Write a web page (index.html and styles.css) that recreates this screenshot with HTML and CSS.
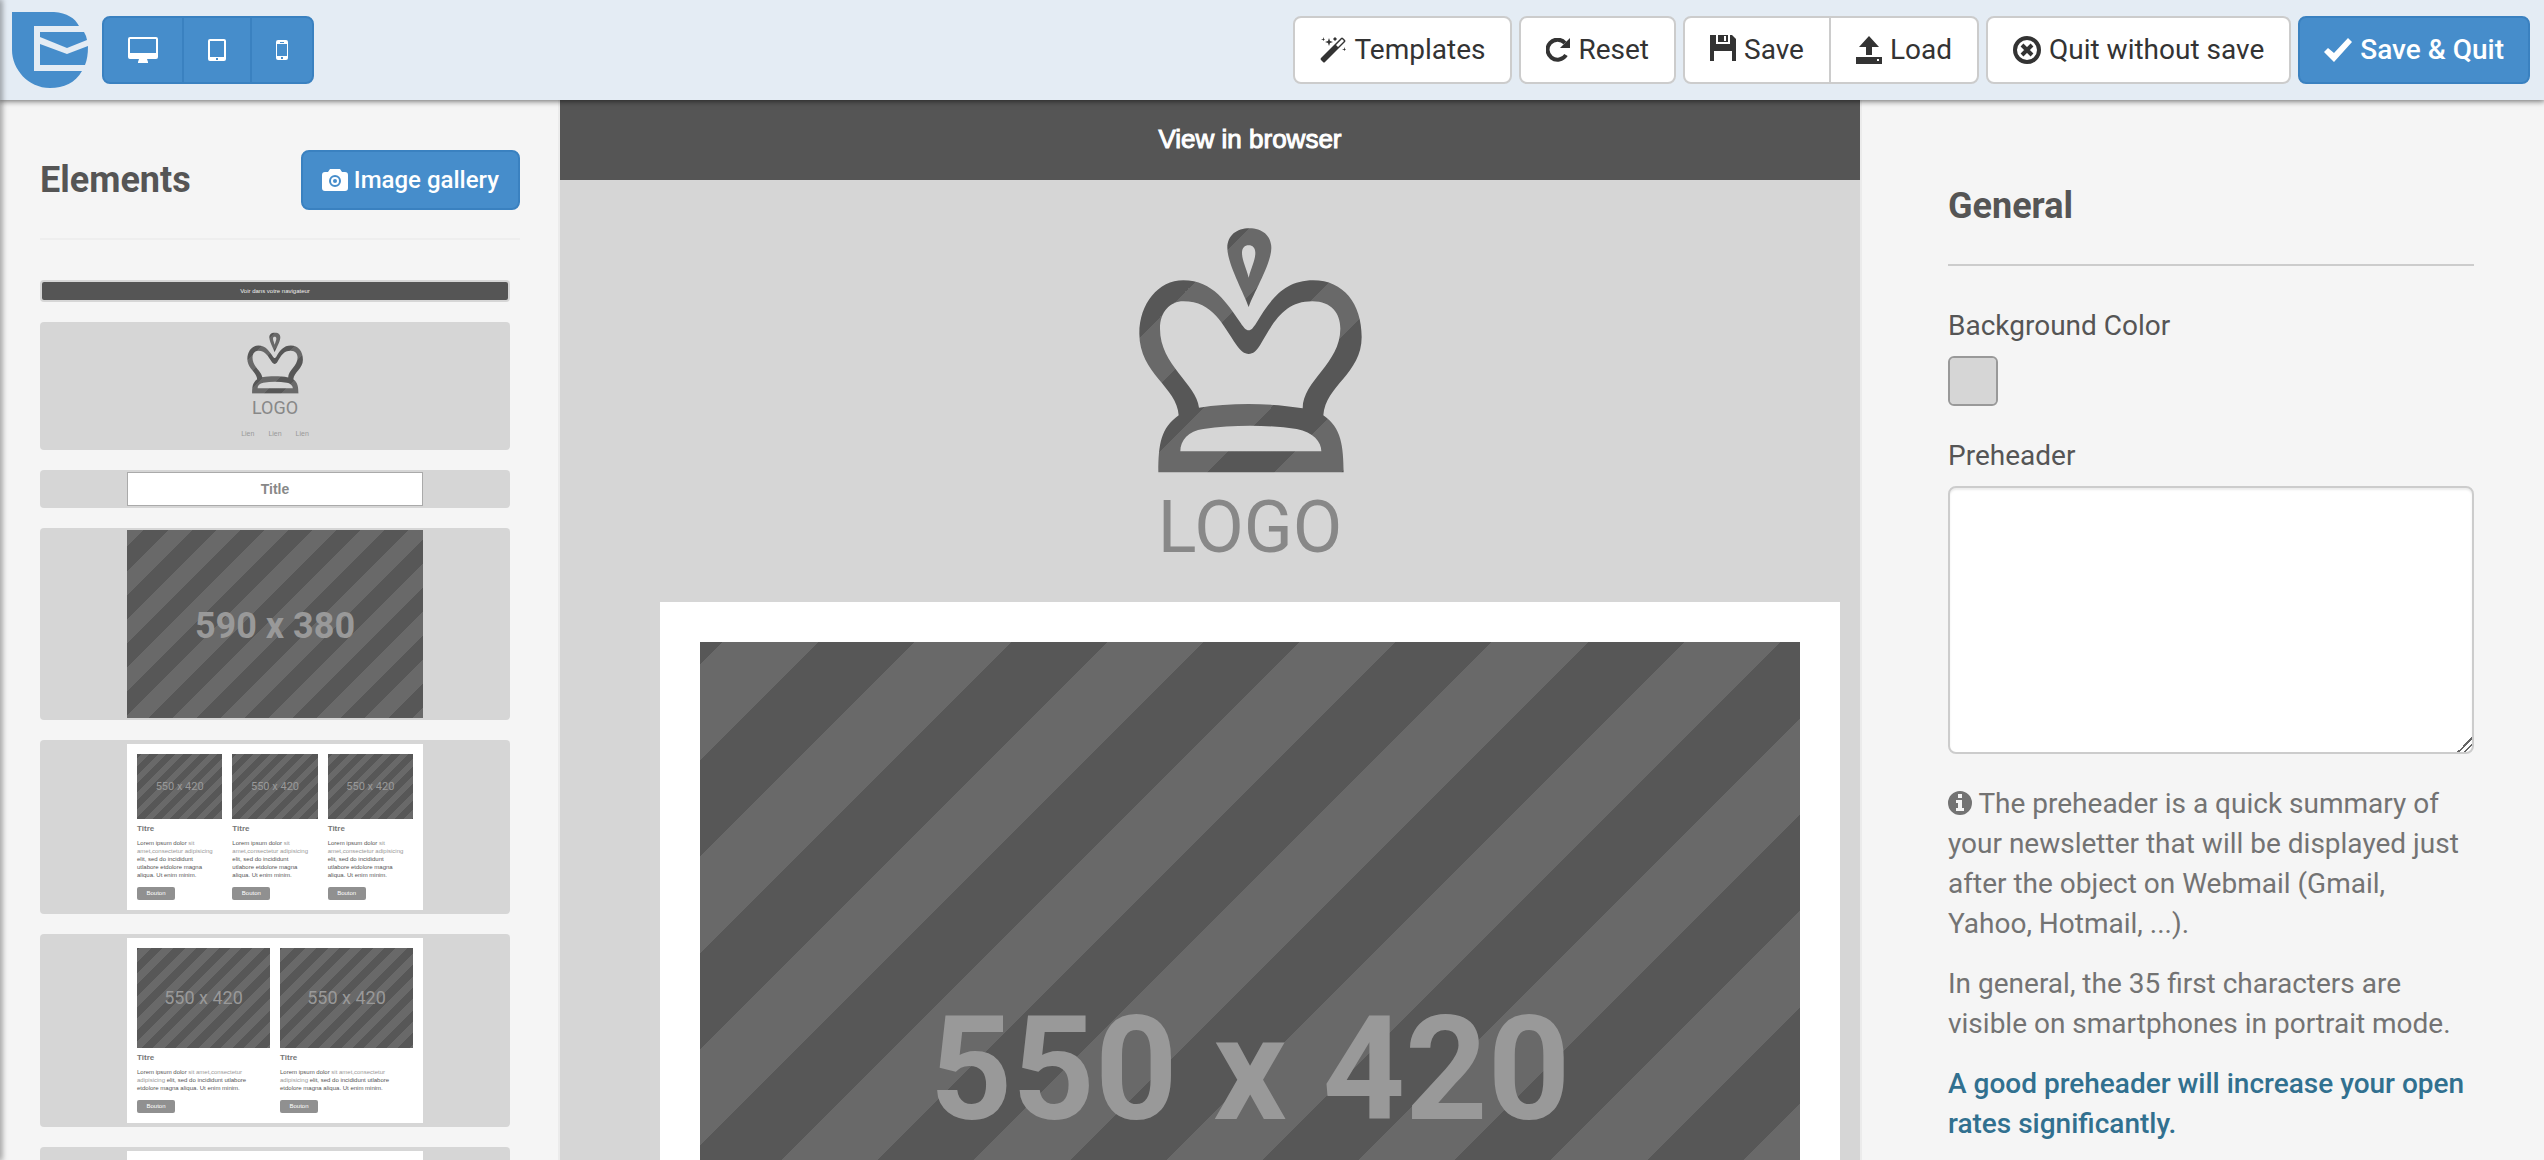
FILE: index.html
```html
<!DOCTYPE html>
<html lang="en">
<head>
    <meta charset="UTF-8">
    <meta name="viewport" content="width=device-width, initial-scale=1.0">
    <title>Newsletter editor</title>
    <link rel="stylesheet" href="styles.css">
</head>
<body>
    <!-- Shared crown drawing -->
    <svg class="defs" aria-hidden="true">
        <defs>
            <linearGradient id="stripes" gradientUnits="userSpaceOnUse" spreadMethod="repeat" x1="460" y1="460" x2="662" y2="662">
                <stop offset="0" stop-color="#696969"/>
                <stop offset="0.5" stop-color="#696969"/>
                <stop offset="0.5" stop-color="#575757"/>
                <stop offset="1" stop-color="#575757"/>
            </linearGradient>
            <symbol id="crown" viewBox="174 413 672 735">
                <path fill="url(#stripes)" fill-rule="evenodd" d="M506 650C490 605 442 520 442 473C442 435 470 414 508 414C546 414 574 435 574 473C574 520 522 605 506 650ZM506 562C514 530 526 510 526 487C526 473 518 465 506 465C494 465 486 473 486 487C486 510 498 530 506 562ZM235 1146C235 1060 243 1013 296 975C292 890 178 850 178 730C178 640 235 570 310 570C400 570 441 640 482 698C491 712 498 720 506 720C514 720 520 712 529 698C570 630 612 570 700 570C790 570 845 640 845 740C845 850 737 885 730 975C785 1012 790 1070 791 1146ZM357 952C350 880 240 825 240 715C240 665 270 633 310 633C400 633 428 705 470 765C482 782 493 791 506 791C520 791 529 782 540 765C583 690 615 633 697 633C755 633 781 670 781 715C781 820 668 870 668 954C570 937 450 937 357 952ZM301 1083C301 1050 325 1022 370 1016C460 1003 560 1003 650 1016C700 1025 724 1055 724 1083Z"/>
            </symbol>
        </defs>
    </svg>

    <header class="topbar">
        <svg class="brand" viewBox="0 0 76 76" aria-hidden="true">
            <path fill="#468dcb" d="M0 0H42C55 1 63 6 67 14H22V59H70C63 71 52 76 38 76C16 76 0 57 0 38Z"/>
            <path fill="#468dcb" d="M28 20H72Q74 23 75 28L55 36L28 25Z"/>
            <path fill="#468dcb" d="M28 32L55 42L76 34Q76 46 73 53H28Z"/>
        </svg>

        <div class="btn-group">
            <button class="btn btn-primary" aria-label="Desktop">
                <svg width="30" height="26" viewBox="0 0 30 26" fill="currentColor"><path fill-rule="evenodd" d="M2 0H28Q30 0 30 2V20Q30 22 28 22H19L20 25V26H10V25L11 22H2Q0 22 0 20V2Q0 0 2 0ZM2 2V16H28V2Z"/></svg>
            </button>
            <button class="btn btn-primary" aria-label="Tablet">
                <svg width="18" height="22" viewBox="0 0 18 22" fill="currentColor"><path fill-rule="evenodd" d="M2 0H16Q18 0 18 2V20Q18 22 16 22H2Q0 22 0 20V2Q0 0 2 0ZM2 2V18H16V2ZM8 19V21H10V19Z"/></svg>
            </button>
            <button class="btn btn-primary" aria-label="Mobile">
                <svg width="12" height="20" viewBox="0 0 12 20" fill="currentColor"><path fill-rule="evenodd" d="M2 0H10Q12 0 12 2V18Q12 20 10 20H2Q0 20 0 18V2Q0 0 2 0ZM1 4V16H11V4ZM5 17V19H7V17ZM4 2V3H8V2Z"/></svg>
            </button>
        </div>

        <div class="actions">
            <button class="btn btn-default">
                <svg width="26" height="26" viewBox="0 0 26 26" fill="currentColor"><path fill-rule="evenodd" d="M21 1Q22 0 23 1L25 3Q26 4 25 5L5 25Q4 26 3 25L1 23Q0 22 1 21ZM16 8L18 10L24 4L22 2Z"/><path d="M9 1L10 4L13 5L10 6L9 9L8 6L5 5L8 4ZM3 0L4 2L5 2L4 3L3 4L3 3L1 2L3 2ZM15 0L16 1L17 2L16 3L15 4L14 3L13 2L14 1ZM24 10L25 12L26 12L25 13L24 14L24 13L22 12L24 12Z"/></svg>
                Templates
            </button>
            <button class="btn btn-default">
                <svg width="24" height="24" viewBox="0 0 24 24"><path fill="none" stroke="currentColor" stroke-width="4" d="M20 17A10 10 0 1 1 19 5"/><path fill="currentColor" d="M24 0V10H14Z"/></svg>
                Reset
            </button>
            <div class="btn-group">
                <button class="btn btn-default">
                    <svg class="icon-up" width="26" height="26" viewBox="0 0 26 26" fill="currentColor"><path d="M0 0H6V9H20V0H22L26 4V26H22V16H4V26H0Z"/><path d="M8 0H18V7H8Z"/><path fill="#fff" d="M14 1H16V6H14Z"/></svg>
                    Save
                </button>
                <button class="btn btn-default">
                    <svg width="26" height="28" viewBox="0 0 26 28" fill="currentColor"><path d="M13 0L23 11H16V19H10V11H3Z"/><path fill-rule="evenodd" d="M0 21H26V28H0ZM21 23V25H23V23Z"/></svg>
                    Load
                </button>
            </div>
            <button class="btn btn-default">
                <svg width="28" height="28" viewBox="0 0 28 28" fill="none" stroke="currentColor"><circle cx="14" cy="14" r="12" stroke-width="4"/><path stroke-width="4" d="M9 9L19 19M19 9L9 19"/></svg>
                Quit without save
            </button>
            <button class="btn btn-primary">
                <svg width="28" height="24" viewBox="0 0 28 24" fill="currentColor"><path d="M24 0L28 4L10 24L0 14L4 10L10 15Z"/></svg>
                Save &amp; Quit
            </button>
        </div>
    </header>

    <main class="editor">
        <aside class="elements">
            <div class="elements-head">
                <h2>Elements</h2>
                <button class="btn btn-primary btn-small">
                    <svg width="26" height="22" viewBox="0 0 26 22"><path fill="#fff" d="M3 3H6L8 0H18L20 3H23Q26 3 26 6V19Q26 22 23 22H3Q0 22 0 19V6Q0 3 3 3Z"/><circle cx="13" cy="12" r="5" fill="none" stroke="#468dcb" stroke-width="2"/><circle cx="13" cy="12" r="2" fill="#468dcb"/></svg>
                    Image gallery
                </button>
            </div>

            <div class="block block-dark">Voir dans votre navigateur</div>

            <div class="block block-logo">
                <svg class="crown" viewBox="174 413 672 735" aria-hidden="true"><use href="#crown" x="174" y="413" width="672" height="735"/></svg>
                <div class="logo-text">LOGO</div>
                <div class="links"><span>Lien</span><span>Lien</span><span>Lien</span></div>
            </div>

            <div class="block">
                <div class="block-title">Title</div>
            </div>

            <div class="block">
                <div class="holder holder-full">590 x 380</div>
            </div>

            <div class="block block-columns">
                <div class="columns">
                    <div class="column">
                        <div class="holder">550 x 420</div>
                        <h3>Titre</h3>
                        <p>Lorem ipsum dolor <i>sit<br>amet,consectetur adipisicing</i><br>elit, sed do incididunt<br>utlabore etdolore magna<br>aliqua. Ut enim minim.</p>
                        <span class="mini-btn">Bouton</span>
                    </div>
                    <div class="column">
                        <div class="holder">550 x 420</div>
                        <h3>Titre</h3>
                        <p>Lorem ipsum dolor <i>sit<br>amet,consectetur adipisicing</i><br>elit, sed do incididunt<br>utlabore etdolore magna<br>aliqua. Ut enim minim.</p>
                        <span class="mini-btn">Bouton</span>
                    </div>
                    <div class="column">
                        <div class="holder">550 x 420</div>
                        <h3>Titre</h3>
                        <p>Lorem ipsum dolor <i>sit<br>amet,consectetur adipisicing</i><br>elit, sed do incididunt<br>utlabore etdolore magna<br>aliqua. Ut enim minim.</p>
                        <span class="mini-btn">Bouton</span>
                    </div>
                </div>
            </div>

            <div class="block block-columns">
                <div class="columns columns-two">
                    <div class="column">
                        <div class="holder">550 x 420</div>
                        <h3>Titre</h3>
                        <p>Lorem ipsum dolor <i>sit amet,consectetur<br>adipisicing</i> elit, sed do incididunt utlabore<br>etdolore magna aliqua. Ut enim minim.</p>
                        <span class="mini-btn">Bouton</span>
                    </div>
                    <div class="column">
                        <div class="holder">550 x 420</div>
                        <h3>Titre</h3>
                        <p>Lorem ipsum dolor <i>sit amet,consectetur<br>adipisicing</i> elit, sed do incididunt utlabore<br>etdolore magna aliqua. Ut enim minim.</p>
                        <span class="mini-btn">Bouton</span>
                    </div>
                </div>
            </div>

            <div class="block block-columns">
                <div class="columns columns-one">
                    <div class="column">
                        <div class="holder"></div>
                    </div>
                </div>
            </div>
        </aside>

        <section class="canvas">
            <div class="view-bar">View in browser</div>
            <div class="mail-header">
                <svg class="crown" viewBox="174 413 672 735" aria-hidden="true"><use href="#crown" x="174" y="413" width="672" height="735"/></svg>
                <div class="logo-text">LOGO</div>
            </div>
            <div class="mail-body">
                <div class="holder">550 x 420</div>
            </div>
        </section>

        <aside class="settings">
            <h2>General</h2>
            <label for="bgColor">Background Color</label>
            <input type="color" id="bgColor" value="#d6d6d6">
            <label for="preheader">Preheader</label>
            <textarea id="preheader"></textarea>
            <div class="help">
                <p><svg width="24" height="24" viewBox="0 0 24 24" fill="currentColor"><path fill-rule="evenodd" d="M12 0A12 12 0 1 1 12 24A12 12 0 1 1 12 0ZM10 3V7H14V3ZM8 9V12H10V17H8V20H16V17H14V9Z"/></svg> The preheader is a quick summary of your newsletter that will be displayed just after the object on Webmail (Gmail, Yahoo, Hotmail, ...).</p>
                <p>In general, the 35 first characters are visible on smartphones in portrait mode.</p>
                <p class="tip">A good preheader will increase your open rates significantly.</p>
            </div>
        </aside>
    </main>
</body>
</html>
```

FILE: styles.css
```css
* {
    box-sizing: border-box;
}
body {
    margin: 0;
    height: 100vh;
    overflow: hidden;
    display: flex;
    flex-direction: column;
    font-family: Roboto, sans-serif;
    font-size: 28px;
    line-height: 40px;
    color: #555;
    background-color: #f5f5f5;
}
/* shadow along the left window edge */
body::before {
    content: "";
    position: fixed;
    z-index: 3;
    top: 0;
    bottom: 0;
    left: -2px;
    width: 2px;
    box-shadow: 0 0 6px 1px rgba(0, 0, 0, 0.6);
}
h2, h3, p {
    margin: 0;
}
h2 {
    font-size: 36px;
    line-height: 40px;
    font-weight: 700;
}
.defs {
    position: absolute;
    width: 0;
    height: 0;
}

/* Top bar */
.topbar {
    position: relative;
    z-index: 2;
    flex: none;
    display: flex;
    align-items: center;
    height: 100px;
    padding: 0 14px 0 12px;
    background-color: #e4ecf4;
    box-shadow: 0 0 6px 1px rgba(0, 0, 0, 0.6);
}
.brand {
    width: 76px;
    height: 76px;
    margin-right: 14px;
}
.actions {
    display: flex;
    gap: 7px;
    margin-left: auto;
}
.btn {
    display: flex;
    align-items: center;
    gap: 8px;
    height: 68px;
    padding: 0 24px;
    border: 2px solid #ccc;
    border-radius: 8px;
    font: inherit;
    white-space: nowrap;
}
.btn-default {
    padding: 0 25px;
    color: #333;
    background-color: #fff;
}
.btn-primary {
    color: #fff;
    background-color: #468dcb;
    border-color: #3a81c0;
    font-weight: 500;
}
.btn-small {
    height: 60px;
    padding: 0 19px;
    gap: 6px;
    font-size: 24px;
}
.icon-up {
    margin-bottom: 4px;
}
.btn-group {
    display: flex;
}
.btn-group .btn:not(:first-child) {
    border-top-left-radius: 0;
    border-bottom-left-radius: 0;
    margin-left: -2px;
}
.btn-group .btn:not(:last-child) {
    border-top-right-radius: 0;
    border-bottom-right-radius: 0;
}

/* Three panes */
.editor {
    flex: 1;
    min-height: 0;
    display: grid;
    grid-template-columns: 560px 1fr 684px;
}
.elements {
    min-height: 0;
    overflow: hidden;
    display: flex;
    flex-direction: column;
    gap: 20px;
    padding: 50px 38px 0 40px;
    border-right: 2px solid #ebebeb;
}
.elements > * {
    flex: none;
}
.elements-head {
    display: flex;
    align-items: center;
    justify-content: space-between;
    padding-bottom: 28px;
    margin-bottom: 20px;
    border-bottom: 2px solid #eee;
}

/* Draggable blocks */
.block {
    width: 470px;
    padding: 2px;
    border-radius: 4px;
    background-color: #d6d6d6;
}
.block-dark {
    height: 22px;
    border: 2px solid #d6d6d6;
    padding: 0;
    background-color: #555;
    color: #eee;
    font-family: "Liberation Sans", Arial, sans-serif;
    font-size: 6px;
    line-height: 18px;
    text-align: center;
}
.block-logo {
    height: 128px;
    padding-top: 10px;
    display: flex;
    flex-direction: column;
    align-items: center;
}
.block-logo .crown {
    width: 56px;
    height: 62px;
}
.logo-text {
    color: #888;
}
.block-logo .logo-text {
    margin-top: 4px;
    font-size: 18px;
    line-height: 20px;
}
.links {
    display: flex;
    gap: 14px;
    margin-top: 12px;
    color: #999;
    font-family: "Liberation Sans", Arial, sans-serif;
    font-size: 7px;
    line-height: 8px;
}
.block-title {
    width: 296px;
    height: 34px;
    margin: 0 auto;
    border: 1px solid #aaa;
    background-color: #fff;
    color: #888;
    font-family: "Liberation Sans", Arial, sans-serif;
    font-size: 14px;
    font-weight: bold;
    line-height: 32px;
    text-align: center;
}
.holder {
    display: flex;
    align-items: center;
    justify-content: center;
    color: #999;
    background: repeating-linear-gradient(135deg, #575757 0 3px, #696969 3px 9px, #575757 9px 12px);
    font-weight: 700;
}
.holder-full {
    width: 296px;
    height: 188px;
    margin: 0 auto;
    padding-top: 4px;
    background: repeating-linear-gradient(135deg, #696969 0 12px, #575757 12px 29px, #696969 29px 34px);
    font-size: 36px;
}
.block-columns {
    padding: 4px;
}
.columns {
    display: flex;
    gap: 10px;
    width: 296px;
    margin: 0 auto;
    padding: 10px;
    background-color: #fff;
    font-family: "Liberation Sans", Arial, sans-serif;
}
.column {
    flex: 1;
    min-width: 0;
}
.column .holder {
    height: 65px;
    font-family: Roboto, sans-serif;
    font-size: 11px;
    font-weight: 400;
}
.columns-two .holder {
    height: 100px;
    font-size: 18px;
    background: repeating-linear-gradient(135deg, #575757 0 2px, #696969 2px 10px, #575757 10px 16px);
}
.columns-one .holder {
    height: 160px;
}
.column h3 {
    margin: 4px 0;
    font-size: 8px;
    line-height: 12px;
    color: #777;
}
.column p {
    margin-bottom: 8px;
    font-size: 6px;
    line-height: 8px;
    white-space: nowrap;
    color: #555;
}
.column i {
    font-style: normal;
    color: #999;
}
.mini-btn {
    display: block;
    width: 38px;
    border-radius: 2px;
    background-color: #909090;
    color: #fff;
    font-size: 6px;
    line-height: 13px;
    text-align: center;
}

/* Mail preview */
.canvas {
    min-width: 0;
    overflow: hidden;
    background-color: #d6d6d6;
}
.view-bar {
    padding: 19px 20px 21px 100px;
    background-color: #555;
    color: #fff;
    font-family: "Liberation Sans", Arial, sans-serif;
    font-size: 26px;
    text-align: center;
    -webkit-text-stroke: 1px #fff;
}
.mail-header {
    display: flex;
    flex-direction: column;
    align-items: center;
    padding: 48px 20px 34px 100px;
}
.mail-header .crown {
    width: 224px;
    height: 245px;
}
.mail-header .logo-text {
    margin-top: 15px;
    font-size: 72px;
    line-height: 80px;
}
.mail-body {
    margin: 0 20px 0 100px;
    padding: 40px;
    background-color: #fff;
}
.mail-body .holder {
    aspect-ratio: 550 / 420;
    padding-top: 16px;
    background: repeating-linear-gradient(135deg, #575757 0 16px, #696969 16px 84px, #575757 84px 136px);
    font-size: 144px;
}

/* Settings */
.settings {
    padding: 86px 70px 0 86px;
    border-left: 2px solid #ebebeb;
}
.settings h2 {
    padding-bottom: 38px;
    margin-bottom: 40px;
    border-bottom: 2px solid #ccc;
}
.settings label {
    display: block;
    margin-bottom: 10px;
}
.settings input[type="color"] {
    display: block;
    width: 50px;
    height: 50px;
    margin: 0 0 30px;
    padding: 0;
    border: 2px solid #999;
    border-radius: 6px;
    background-color: #d6d6d6;
    appearance: none;
}
.settings input::-webkit-color-swatch-wrapper {
    padding: 0;
}
.settings input::-webkit-color-swatch {
    border: 0;
    border-radius: 4px;
}
.settings textarea {
    display: block;
    width: 100%;
    height: 268px;
    margin-bottom: 30px;
    padding: 12px 24px;
    border: 2px solid #ccc;
    border-radius: 8px;
    background-color: #fff;
    box-shadow: inset 0 2px 2px rgba(0, 0, 0, 0.08);
    font: inherit;
    resize: vertical;
}
.settings textarea::-webkit-resizer {
    background: linear-gradient(135deg, transparent 50%, #666 50% 57%, transparent 57% 71%, #666 71% 78%, transparent 78%);
}
.help {
    color: #737373;
}
.help p {
    margin-bottom: 20px;
}
.help svg {
    vertical-align: -2px;
}
.help .tip {
    color: #31708f;
    font-weight: 500;
}
```
